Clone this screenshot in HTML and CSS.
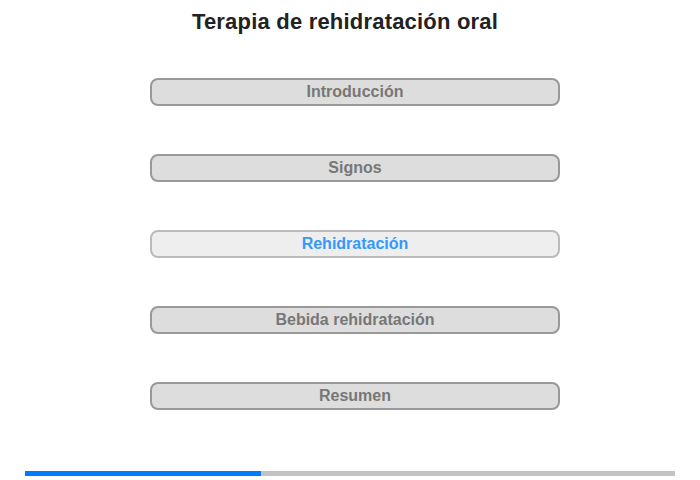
FILE: index.html
```html
<!DOCTYPE html>
<html lang="es">
  <head>
    <meta charset="UTF-8" />
    <meta name="viewport" content="width=device-width, initial-scale=1.0" />
    <title>Terapia de rehidratación oral</title>
    <link rel="stylesheet" href="styles.css">
  </head>
  <body>
    <div class="page">
      <h1 class="title">Terapia de rehidratación oral</h1>
      <div class="steps">
        <button class="step">Introducción</button>
        <button class="step">Signos</button>
        <button class="step active">Rehidratación</button>
        <button class="step">Bebida rehidratación</button>
        <button class="step">Resumen</button>
      </div>
      <div class="progress">
        <div class="progress-fill" style="width: 236px"></div>
      </div>
    </div>
  </body>
</html>
```

FILE: styles.css
```css
* {
  font-family: "Liberation Sans", Arial, sans-serif;
  box-sizing: border-box;
}

body {
  margin: 0;
  background-color: #fff;
  color: #222;
}

.page {
  width: 700px;
  height: 480px;
  display: flex;
  flex-direction: column;
  align-items: center;
}

.title {
  margin: 10px 10px 0 0;
  font-size: 22px;
  line-height: 24px;
  letter-spacing: 0.2px;
  font-weight: bold;
  color: #222;
}

.steps {
  display: flex;
  flex-direction: column;
  gap: 48px;
  margin: 44px 0 0 10px;
}

.step {
  width: 410px;
  height: 28px;
  padding: 0;
  background-color: #dddddd;
  border: 2px solid #999;
  border-radius: 8px;
  color: #777;
  font-size: 16px;
  font-weight: bold;
  cursor: pointer;
}

.step.active {
  background-color: #eeeeee;
  border-color: #bbb;
  color: #3399ff;
}

.progress {
  width: 650px;
  height: 5px;
  margin-top: 61px;
  background-color: #c3c3c3;
}

.progress-fill {
  height: 100%;
  background-color: #007bff;
}
```
